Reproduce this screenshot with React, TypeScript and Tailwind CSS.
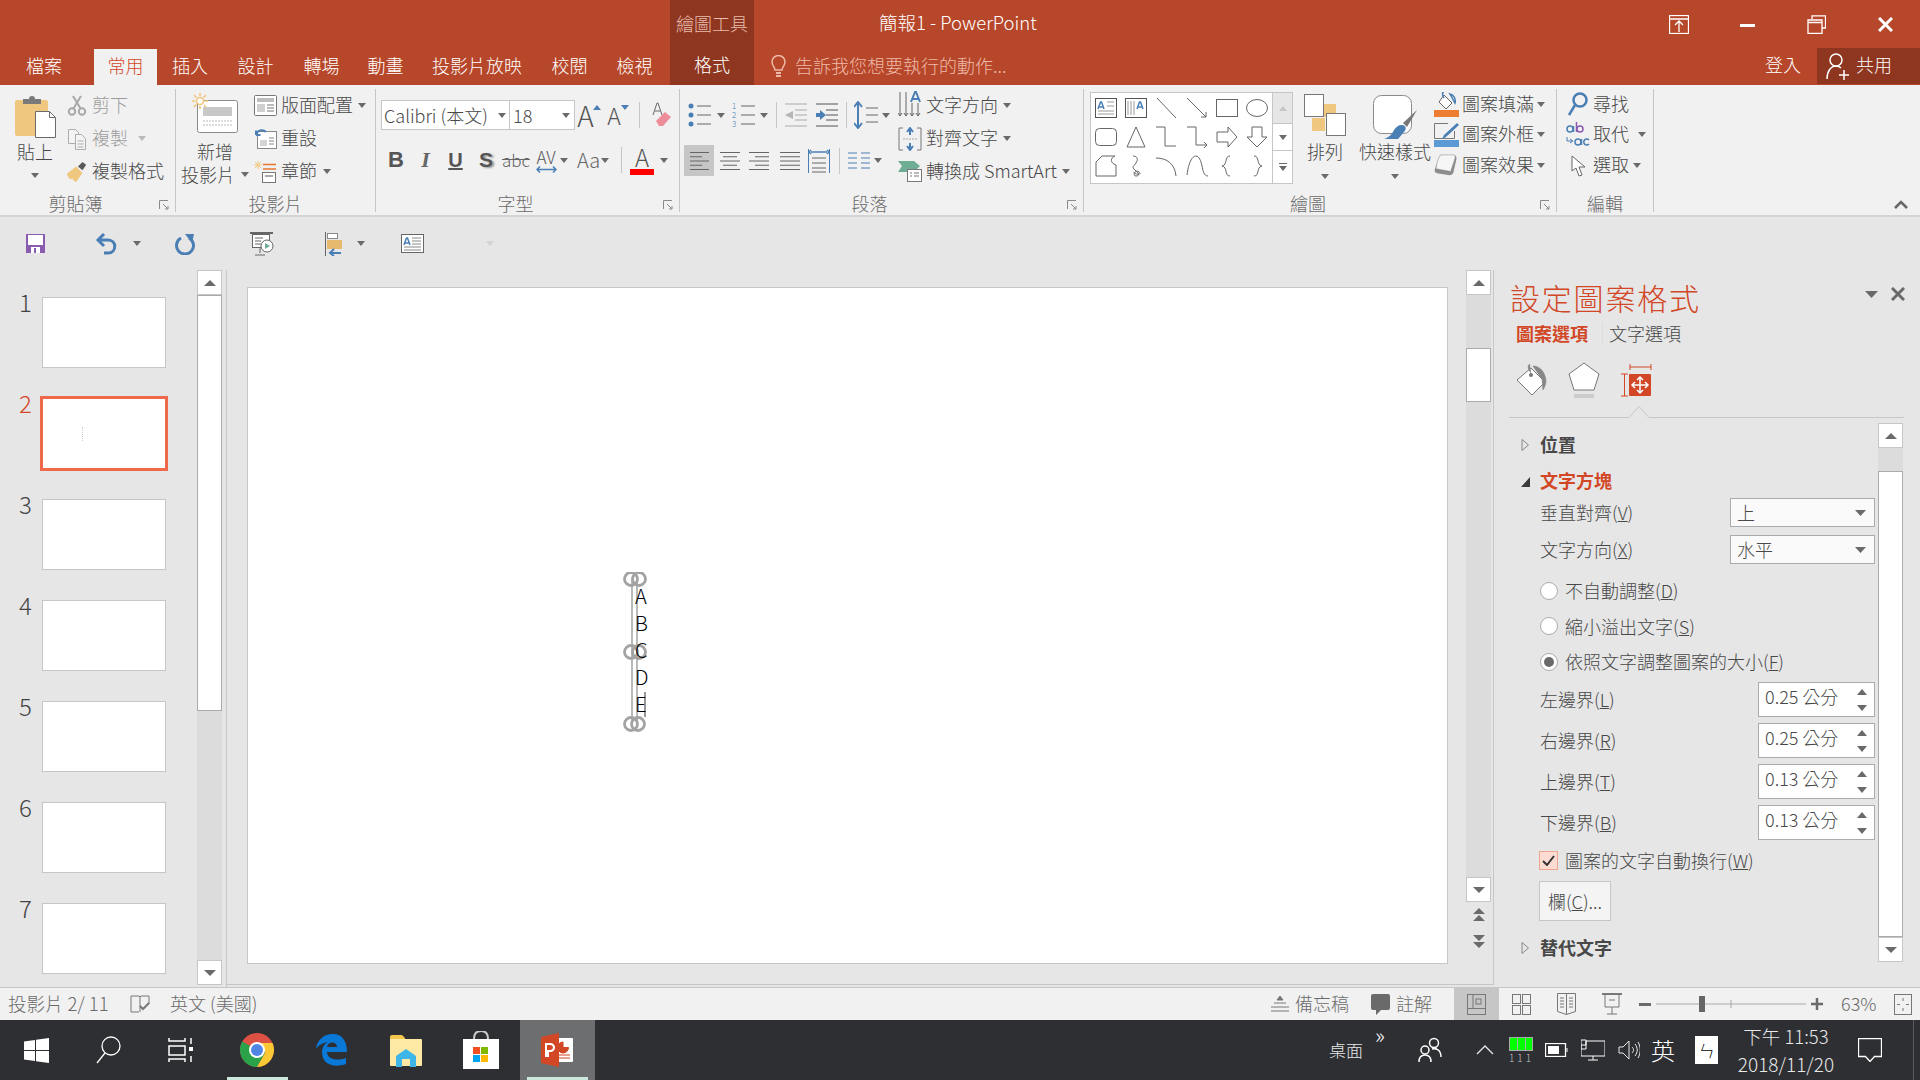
import React from 'react';

const Caret = ({ className = '' }: { className?: string }) => (
  <svg width="8" height="5" viewBox="0 0 8 5" className={`shrink-0 ${className}`}>
    <path d="M0 0h8L4 5z" fill="#6a6a6a" />
  </svg>
);

const Launcher = () => (
  <svg width="10" height="10" viewBox="0 0 10 10" fill="none" stroke="#8a8a8a">
    <path d="M.5 9V.5H9M4 4l5 5M9 6v3H6" />
  </svg>
);

const Sep = ({ className = '' }: { className?: string }) => <span className={`h-[26px] w-px shrink-0 bg-[#c6c6c6] ${className}`} />;

// ribbon group: content on top, label row below, separator on the right
const Group = ({ w, label, launcher, children }: { w: string; label: string; launcher?: boolean; children: React.ReactNode }) => (
  <div className={`flex h-[123px] shrink-0 flex-col border-r border-[#c6c6c6] ${w}`}>
    <div className="h-[102px]">{children}</div>
    <div className="flex h-[21px] items-center">
      <span className="mt-[4px] flex-1 text-center text-[18px] leading-[21px] text-[#6a6a6a]">{label}</span>
      {launcher && <span className="mt-[6px] flex w-[24px] justify-start pl-[8px]"><Launcher /></span>}
    </div>
  </div>
);

const RibbonRow = ({ icon, text, iw, gap, h = 'h-[33px]', grey, caret }: { icon: React.ReactNode; text: string; iw: string; gap: string; h?: string; grey?: boolean; caret?: string }) => (
  <div className={`flex items-center ${h}`}>
    <span className={`flex shrink-0 justify-center ${iw}`}>{icon}</span>
    <span className={`-mt-[3px] ${gap} whitespace-nowrap text-[18px] leading-[22px] ${grey ? 'text-[#9c9c9c]' : 'text-[#484848]'}`}>{text}</span>
    {caret && <Caret className={caret} />}
  </div>
);

const Lines = ({ rows, color = '#666', w = 24, h = 22 }: { rows: [number, number][]; color?: string; w?: number; h?: number }) => (
  <svg width={w} height={h} viewBox={`0 0 ${w} ${h}`} stroke={color}>
    {rows.map(([a, b], i) => <path key={i} d={`M${a} ${2.5 + i * ((h - 5) / (rows.length - 1))}H${b}`} />)}
  </svg>
);

const Paste = () => (
  <svg width="41" height="44" viewBox="0 0 41 44">
    <rect y="6" width="33" height="36" rx="2" fill="#efc77f" />
    <path d="M8 10V5h6a3 3 0 0 1 6 0h6v5z" fill="#7a7a7a" />
    <path d="M20.5 17.5h14l6 6v20h-20z" fill="#fff" stroke="#6a6a6a" />
    <path d="M34.5 17.5v6h6" fill="none" stroke="#6a6a6a" />
  </svg>
);

const Scissors = () => (
  <svg width="20" height="21" viewBox="0 0 20 21" fill="none" stroke="#a8a8a8" strokeWidth="2">
    <circle cx="5" cy="16.5" r="3.2" /><circle cx="15" cy="16.5" r="3.2" /><path d="M6.5 13.5 14 1M13.5 13.5 6 1" />
  </svg>
);

const Copy = () => (
  <svg width="20" height="22" viewBox="0 0 20 22" fill="#f4f4f4" stroke="#adadad">
    <path d="M1.5 1.5h7l3 3v11h-10z" /><path d="M8.5 6.5h6l4 4v11h-10z" /><path d="M10.5 13h6M10.5 16h6M10.5 19h6" />
  </svg>
);

const Brush = () => (
  <svg width="24" height="24" viewBox="0 0 24 24">
    <path d="M1 14 11 6l7 7-7 10c-2-1-3-2-4-4l-2 1c-2-1-3-3-4-6z" fill="#efc77f" />
    <path d="m13 6 5-5 4 3-4 6z" fill="#5a5a5a" />
  </svg>
);

const NewSlide = () => (
  <svg width="46" height="41" viewBox="0 0 46 41">
    <rect x="5.5" y="8.5" width="40" height="32" rx="2" fill="#fff" stroke="#8a8a8a" />
    <rect x="11" y="15" width="29" height="9" fill="#c8c8c8" />
    <path d="M11 29h29M11 33h29" stroke="#bbb" strokeDasharray="2 1" />
    <g stroke="#efc77f" strokeWidth="1.6"><circle cx="8" cy="9" r="3.5" fill="#fff" /><path d="M8 1v3M8 14v3M0 9h3M13 9h3M2 3l2.500 2.500M12 13l2 2M14 3l-2.500 2.500M2 15l2.500-2.500" /></g>
  </svg>
);

const Layout = () => (
  <svg width="23" height="21" viewBox="0 0 23 21" fill="none">
    <rect x=".5" y=".5" width="22" height="20" rx="1" fill="#fff" stroke="#777" />
    <rect x="3" y="3" width="17" height="4" fill="#bdbdbd" /><rect x="3" y="9" width="8" height="8" fill="#d0d0d0" />
    <path d="M13 10h7M13 13h7M13 16h7" stroke="#777" />
  </svg>
);

const Reset = () => (
  <svg width="23" height="21" viewBox="0 0 23 21" fill="none">
    <rect x="3.500" y="3.500" width="19" height="17" fill="#fff" stroke="#888" />
    <rect x="6" y="12" width="7" height="6" fill="#d4d4d4" /><path d="M15 10h5M15 13h5M15 16h5" stroke="#888" />
    <path d="M2 7c1-5 7-6 10-3M2 7V2.500M2 7h4.500" stroke="#4a7fb5" strokeWidth="2" />
  </svg>
);

const Section = () => (
  <svg width="23" height="23" viewBox="0 0 23 23" fill="none">
    <g stroke="#efc77f"><path d="M4 1v8M0 5h8M1 2l6 6M7 2 1 8" /></g>
    <path d="M9 4.500h13M9 9h13" stroke="#e8792f" strokeWidth="1.500" />
    <rect x="8.500" y="12.500" width="13" height="10" fill="#fff" stroke="#777" /><rect x="11" y="15" width="8" height="2" fill="#aaa" />
  </svg>
);

const Eraser = () => (
  <svg width="20" height="28" viewBox="0 0 20 28">
    <path d="m4 20 9-9 6 5-8 9H7z" fill="#ee8d9a" /><path d="M1 14 5 2h1l4 12M3 10h5" fill="none" stroke="#6a6a6a" />
  </svg>
);

const Bullets = ({ num }: { num?: boolean }) => (
  <svg width="24" height="26" viewBox="0 0 24 26">
    {[4, 13, 22].map((y, i) => (
      <g key={y}>
        {num ? <text x="1" y={y + 3} fontSize="8" fill="#4a7fb5">{i + 1}</text> : <circle cx="4" cy={y} r="2.500" fill="#4a7fb5" />}
        <path d={`M10 ${y}h14`} stroke="#666" />
      </g>
    ))}
  </svg>
);

const Indent = ({ out }: { out?: boolean }) => (
  <svg width="24" height="26" viewBox="0 0 24 26">
    <path d="M1 2h22M11 8h12M11 13h12M11 18h12M1 24h22" stroke={out ? '#aaa' : '#555'} />
    {out ? <path d="M9 9v8l-8-4z M6 12h3v2H6z" fill="#b5b5b5" /> : <path d="M1 11h4V8l6 5-6 5v-3H1z" fill="#4a7fb5" />}
  </svg>
);

const LineSpacing = () => (
  <svg width="24" height="28" viewBox="0 0 24 28" fill="none">
    <path d="M4 2v24M0 6l4-5 4 5M0 22l4 5 4-5" stroke="#4a7fb5" strokeWidth="2" /><path d="M12 7h12M12 14h12M12 21h12" stroke="#666" />
  </svg>
);

const TextDir = () => (
  <svg width="24" height="29" viewBox="0 0 24 29" fill="none" stroke="#666">
    <path d="M2 1v24M8 1v24M14 12v13M20 12v13M0 22l2 3 2-3M6 22l2 3 2-3M12 22l2 3 2-3M18 22l2 3 2-3" />
    <path d="m13 11 4-10h1l4 10M15 8h5" stroke="#4a7fb5" strokeWidth="2" />
  </svg>
);

const AlignText = () => (
  <svg width="24" height="24" viewBox="0 0 24 24" fill="none">
    <path d="M5 1H1v22h4M19 1h4v22h-4" stroke="#777" /><path d="M5 12h14" stroke="#aaa" strokeDasharray="2 1" />
    <path d="M12 1v7M9 5l3-4 3 4M12 23v-7M9 19l3 4 3-4" stroke="#4a7fb5" strokeWidth="2" />
  </svg>
);

const SmartArt = () => (
  <svg width="24" height="21" viewBox="0 0 24 21">
    <path d="M0 0h16l6 5-6 6H0l4-6z" fill="#6fae95" /><rect x="9.500" y="8.500" width="14" height="12" fill="#fff" stroke="#777" /><path d="M12 12h2M16 12h5M12 15h2M16 15h5" stroke="#777" />
  </svg>
);

const shapes: React.ReactNode[] = [
  <><rect x=".5" y="1.500" width="21" height="19" fill="#fff" stroke="#555" /><path d="m3 12 2.500-7h1L9 12M4 10h4" fill="none" stroke="#4a7fb5" strokeWidth="1.500" /><path d="M12 5h7M12 9h7M3 14h16M3 17h16" stroke="#999" /></>,
  <><rect x=".5" y="1.500" width="21" height="19" fill="#fff" stroke="#555" /><path d="m12 12 2.500-7h1L18 12M13 10h4" fill="none" stroke="#4a7fb5" strokeWidth="1.500" /><path d="M3 4v14M6 4v14M9 4v14" stroke="#999" /></>,
  <path d="m2 1 19 20" stroke="#666" />,
  <path d="m1 1 19 19M20 15v5h-5" stroke="#666" fill="none" />,
  <rect x=".5" y="2.500" width="21" height="17" fill="#fff" stroke="#666" />,
  <ellipse cx="11" cy="11" rx="10.500" ry="8.500" fill="#fff" stroke="#666" />,
  <rect x=".5" y="2.500" width="21" height="17" rx="4" fill="#fff" stroke="#666" />,
  <path d="M11 1 20 21H2z" fill="#fff" stroke="#666" />,
  <path d="M1 1h9v19h11" fill="none" stroke="#666" />,
  <path d="M1 1h9v18h11M18 16l3 3-3 3" fill="none" stroke="#666" />,
  <path d="M1 6h11V1l9 10-9 10v-5H1z" fill="#fff" stroke="#666" />,
  <path d="M6 1h10v10h5L11 21 1 11h5z" fill="#fff" stroke="#666" />,
  <path d="M7 1h13c-5 2-5 7 1 9v11H1V7z" fill="#fff" stroke="#666" />,
  <path d="M8 1c5 0 5 4 3 7s-5 4-1 7 5 6 1 6-1-7 3-4-5 3-5 0" fill="none" stroke="#666" />,
  <path d="M1 3c11 0 19 6 20 18" fill="none" stroke="#666" />,
  <path d="M1 20C3 5 7 1 10 1s5 5 6 10 2 10 6 10" fill="none" stroke="#666" />,
  <path d="M14 1c-6 0-2 9-8 10 6 1 2 10 8 10" fill="none" stroke="#666" />,
  <path d="M8 1c6 0 2 9 8 10-6 1-2 10-8 10" fill="none" stroke="#666" />,
];

const Arrange = () => (
  <svg width="42" height="42" viewBox="0 0 42 42">
    <rect x="19" y="10" width="13" height="13" fill="#efc77f" /><rect x="8" y="24" width="13" height="13" fill="#efc77f" />
    <rect x=".5" y=".5" width="19" height="22" fill="#fff" stroke="#777" /><rect x="22.500" y="19.500" width="19" height="22" fill="#fff" stroke="#777" />
  </svg>
);

const QuickStyle = () => (
  <svg width="44" height="45" viewBox="0 0 44 45">
    <rect x=".5" y=".5" width="38" height="38" rx="8" fill="#fff" stroke="#8a8a8a" />
    <path d="m44 15-10 17-4-4z" fill="#777" /><path d="M29 30c4 0 5 4 2 7l-6 7H11c6-2 8-5 10-9 2-3 4-5 8-5z" fill="#4a7fb5" />
  </svg>
);

const FillIcon = () => (
  <svg width="25" height="25" viewBox="0 0 25 25">
    <rect y="18" width="25" height="7" fill="#ed7d31" /><path d="m10 3 8 8-6 6-7-7z" fill="#fff" stroke="#666" /><path d="M10 0c-2 0-2 3 0 6M16 2c4 1 6 5 5 9-2-3-3-6-5-9z" fill="none" stroke="#4a7fb5" strokeWidth="1.500" />
  </svg>
);

const OutlineIcon = () => (
  <svg width="25" height="24" viewBox="0 0 25 24">
    <rect y="17" width="25" height="7" fill="#5b9bd5" /><path d="M14 .5H.5v15h20V8" fill="none" stroke="#777" /><path d="M23 0l2 2L12 14l-4 2 2-4z" fill="#4a7fb5" />
  </svg>
);

const EffectIcon = () => (
  <svg width="25" height="23" viewBox="0 0 27 25">
    <path d="M7 1h14c3 0 4 3 3 6l-3 13c-1 2-2 3-4 3L3 21c-2-1-3-3-2-5z" fill="#8d8d8d" /><path d="M7 1h14c3 0 2 3 1 6L18 19 2 16C3 10 4 5 7 1z" fill="#f6f6f6" stroke="#777" strokeWidth=".5" />
  </svg>
);

const Find = () => (
  <svg width="20" height="24" viewBox="0 0 20 24" fill="none" stroke="#4a7fb5">
    <circle cx="12" cy="8" r="6.500" strokeWidth="2.500" /><path d="M7 13 1 23" strokeWidth="2.500" />
  </svg>
);

const Replace = () => (
  <svg width="24" height="26" viewBox="0 0 24 26" fill="none">
    <circle cx="4" cy="7" r="3" stroke="#4a7fb5" strokeWidth="1.500" /><path d="M7.500 4v6" stroke="#4a7fb5" strokeWidth="1.500" />
    <circle cx="14" cy="7" r="3" stroke="#8a5cb0" strokeWidth="1.500" /><path d="M10.500 0v10" stroke="#8a5cb0" strokeWidth="1.500" />
    <circle cx="12" cy="20" r="3" stroke="#4a7fb5" strokeWidth="1.500" /><path d="M15.500 17v6" stroke="#4a7fb5" strokeWidth="1.500" />
    <path d="M23 18a3 3 0 1 0 0 4" stroke="#4a7fb5" strokeWidth="1.500" /><path d="M1 15v4h5M4 17l3 2-3 2" stroke="#4a7fb5" />
  </svg>
);

const Pointer = () => (
  <svg width="15" height="22" viewBox="0 0 15 22"><path d="M1 1v15l4-3 3 8 3-1-3-8h6z" fill="#fff" stroke="#666" /></svg>
);

const Ribbon = () => (
  <div className="flex h-[132px] shrink-0 border-b-2 border-[#d4d4d4] bg-[#f1f1f1] pt-[4px]">
    <Group w="w-[176px]" label="剪貼簿" launcher>
      <div className="flex">
        <div className="ml-[8px] flex w-[54px] flex-col items-center pt-[5px]">
          <Paste />
          <span className="mt-[2px] text-[18px] leading-[22px] text-[#484848]">貼上</span>
          <Caret className="mt-[11px]" />
        </div>
        <div className="ml-[4px]">
          <RibbonRow icon={<Scissors />} text="剪下" iw="w-[22px]" gap="ml-[4px]" grey />
          <RibbonRow icon={<Copy />} text="複製" iw="w-[22px]" gap="ml-[4px]" grey caret="ml-[10px] opacity-40" />
          <RibbonRow icon={<Brush />} text="複製格式" iw="w-[22px]" gap="ml-[4px]" />
        </div>
      </div>
    </Group>
    <Group w="w-[200px]" label="投影片">
      <div className="flex">
        <div className="flex w-[78px] flex-col items-center pt-[3px]">
          <NewSlide />
          <span className="mt-[6px] text-[18px] leading-[24px] text-[#484848]">新增</span>
          <span className="-mt-[1px] flex items-center text-[18px] leading-[24px] text-[#484848]">投影片<Caret className="ml-[6px]" /></span>
        </div>
        <div>
          <RibbonRow icon={<Layout />} text="版面配置" iw="w-[23px]" gap="ml-[4px]" caret="ml-[5px]" />
          <RibbonRow icon={<Reset />} text="重設" iw="w-[23px]" gap="ml-[4px]" />
          <RibbonRow icon={<Section />} text="章節" iw="w-[23px]" gap="ml-[4px]" caret="ml-[6px]" />
        </div>
      </div>
    </Group>
    <Group w="w-[304px]" label="字型" launcher>
      <div className="pt-[11px]">
        <div className="flex h-[30px] items-center pl-[5px]">
          <div className="flex h-[30px] w-[129px] items-center border border-[#c6c6c6] bg-white pl-[2px] text-[18px] leading-[24px] text-[#484848]"><span className="flex-1 whitespace-nowrap">Calibri (本文)</span><Caret className="mr-[3px]" /></div>
          <div className="flex h-[30px] w-[65px] items-center border border-l-0 border-[#c6c6c6] bg-white pl-[3px] text-[18px] leading-[24px] text-[#484848]"><span className="flex-1">18</span><Caret className="mr-[4px]" /></div>
          <span className="flex w-[28px] items-start justify-center text-[28px] leading-[30px] text-[#555]">A<svg width="8" height="5" viewBox="0 0 8 5" className="mt-[5px] -ml-[1px]"><path d="M0 5h8L4 0z" fill="#4a7fb5" /></svg></span>
          <span className="flex w-[30px] items-start justify-center text-[23px] leading-[30px] text-[#555]">A<svg width="8" height="5" viewBox="0 0 8 5" className="mt-[5px]"><path d="M0 0h8L4 5z" fill="#4a7fb5" /></svg></span>
          <Sep className="ml-[6px]" />
          <span className="ml-[12px]"><Eraser /></span>
        </div>
        <div className="mt-[15px] flex h-[30px] items-center pl-[5px] text-[#555]">
          <span className="w-[30px] text-center font-['Liberation_Sans'] text-[22px] leading-[26px] font-bold">B</span>
          <span className="w-[29px] text-center font-['Liberation_Serif'] text-[22px] leading-[26px] font-bold text-[#666] italic">I</span>
          <span className="w-[31px] text-center font-['Liberation_Sans'] text-[20px] leading-[26px] font-bold underline">U</span>
          <span className="w-[30px] text-center font-['Liberation_Sans'] text-[21px] leading-[26px] font-bold [text-shadow:2px_1px_2px_#999]">S</span>
          <span className="w-[30px] text-center text-[17px] leading-[24px] text-[#666] line-through">abc</span>
          <span className="flex w-[42px] items-center pl-[4px]">
            <span className="flex w-[22px] flex-col items-center text-[17px] leading-[18px]">AV<svg width="21" height="7" viewBox="0 0 21 7" fill="none" stroke="#4a7fb5" strokeWidth="1.500"><path d="M1 3.500h19M4 .5l-3 3 3 3M17 .5l3 3-3 3" /></svg></span>
            <Caret className="ml-[3px]" />
          </span>
          <span className="flex w-[42px] items-center pl-[4px] text-[20px] leading-[26px] text-[#666]">Aa<Caret className="ml-[1px]" /></span>
          <Sep className="ml-[6px]" />
          <span className="ml-[8px] flex w-[24px] flex-col items-center text-[24px] leading-[24px] text-[#555]">A<span className="h-[6px] w-[24px] bg-[#ff0000]" /></span>
          <Caret className="ml-[6px]" />
        </div>
      </div>
    </Group>
    <Group w="w-[404px]" label="段落" launcher>
      <div className="flex">
        <div className="w-[218px] pt-[11px]">
          <div className="flex h-[30px] items-center pl-[7px]">
            <Bullets /><Caret className="ml-[6px]" />
            <span className="ml-[6px]"><Bullets num /></span><Caret className="ml-[5px]" />
            <Sep className="ml-[8px]" />
            <span className="ml-[7px]"><Indent out /></span>
            <span className="ml-[7px]"><Indent /></span>
            <Sep className="ml-[7px]" />
            <span className="ml-[7px]"><LineSpacing /></span><Caret className="ml-[4px]" />
          </div>
          <div className="mt-[15px] flex h-[31px] items-center pl-[4px]">
            <span className="flex h-[31px] w-[30px] items-center justify-center bg-[#c6c6c6]"><Lines rows={[[1, 20], [1, 13], [1, 20], [1, 13], [1, 20]]} w={21} /></span>
            <span className="ml-[3px] flex w-[26px] justify-center"><Lines rows={[[0, 20], [3, 17], [0, 20], [3, 17], [0, 20]]} w={20} /></span>
            <span className="ml-[3px] flex w-[26px] justify-center"><Lines rows={[[0, 20], [6, 20], [0, 20], [6, 20], [0, 20]]} w={20} /></span>
            <span className="ml-[5px] flex w-[26px] justify-center"><Lines rows={[[0, 20], [0, 20], [0, 20], [0, 20], [0, 20]]} w={20} /></span>
            <span className="ml-[3px] flex w-[26px] justify-center">
              <svg width="22" height="26" viewBox="0 0 22 26" fill="none"><path d="M.5 1v24M21.500 1v24" stroke="#4a7fb5" /><path d="M3 4h16M3 2l-2 2 2 2M19 2l2 2-2 2" stroke="#4a7fb5" strokeWidth="1.500" /><path d="M4 10h14M4 15h14M4 20h14M4 24h14" stroke="#666" /></svg>
            </span>
            <Sep className="ml-[7px]" />
            <span className="ml-[7px] flex w-[24px] justify-center"><svg width="22" height="24" viewBox="0 0 22 24" stroke="#4a7fb5"><path d="M0 4h9M13 4h9M0 9h9M13 9h9M0 14h9M13 14h9M0 19h9M13 19h9" /></svg></span>
            <Caret className="ml-[3px]" />
          </div>
        </div>
        <div>
          <RibbonRow icon={<TextDir />} text="文字方向" iw="w-[24px]" gap="ml-[4px]" caret="ml-[5px]" />
          <RibbonRow icon={<AlignText />} text="對齊文字" iw="w-[24px]" gap="ml-[4px]" caret="ml-[5px]" />
          <RibbonRow icon={<SmartArt />} text="轉換成 SmartArt" iw="w-[24px]" gap="ml-[4px]" caret="ml-[5px]" />
        </div>
      </div>
    </Group>
    <Group w="w-[473px]" label="繪圖" launcher>
      <div className="flex">
        <div className="ml-[6px] mt-[3px] flex h-[92px] w-[203px] border border-[#c6c6c6] bg-white">
          <div className="grid flex-1 grid-cols-6 place-items-center pb-[3px]">
            {shapes.map((s, i) => <svg key={i} width="22" height="22" viewBox="0 0 22 22">{s}</svg>)}
          </div>
          <div className="flex w-[20px] flex-col border-l border-[#c6c6c6]">
            <span className="flex h-[30px] items-center justify-center bg-[#e6e6e6]"><svg width="8" height="5" viewBox="0 0 8 5"><path d="M0 5h8L4 0z" fill="#c6c6c6" /></svg></span>
            <span className="flex h-[28px] items-center justify-center border-y border-[#c6c6c6]"><Caret /></span>
            <span className="flex flex-1 flex-col items-center justify-center gap-[2px]"><span className="h-px w-[8px] bg-[#6a6a6a]" /><Caret /></span>
          </div>
        </div>
        <div className="flex w-[64px] flex-col items-center pt-[5px]">
          <Arrange />
          <span className="mt-[4px] text-[18px] leading-[22px] text-[#484848]">排列</span>
          <Caret className="mt-[12px]" />
        </div>
        <div className="flex w-[76px] flex-col items-center pt-[6px]">
          <QuickStyle />
          <span className="mt-[0px] whitespace-nowrap text-[18px] leading-[22px] text-[#484848]">快速樣式</span>
          <Caret className="mt-[12px]" />
        </div>
        <div className="ml-[1px]">
          <RibbonRow icon={<FillIcon />} text="圖案填滿" iw="w-[25px]" gap="ml-[3px]" h="h-[30px]" caret="ml-[3px]" />
          <RibbonRow icon={<OutlineIcon />} text="圖案外框" iw="w-[25px]" gap="ml-[3px]" h="h-[31px]" caret="ml-[3px]" />
          <RibbonRow icon={<EffectIcon />} text="圖案效果" iw="w-[25px]" gap="ml-[3px]" h="h-[31px]" caret="ml-[3px]" />
        </div>
      </div>
    </Group>
    <Group w="w-[97px]" label="編輯">
      <div className="pl-[9px]">
        <RibbonRow icon={<Find />} text="尋找" iw="w-[24px]" gap="ml-[3px]" h="h-[30px]" />
        <RibbonRow icon={<Replace />} text="取代" iw="w-[24px]" gap="ml-[3px]" h="h-[31px]" caret="ml-[9px]" />
        <RibbonRow icon={<Pointer />} text="選取" iw="w-[24px]" gap="ml-[3px]" h="h-[31px]" caret="ml-[4px]" />
      </div>
    </Group>
    <div className="flex flex-1 items-end justify-end pr-[12px] pb-[6px]">
      <svg width="14" height="9" viewBox="0 0 14 9" fill="none" stroke="#666" strokeWidth="2.500"><path d="m1 8 6-6 6 6" /></svg>
    </div>
  </div>
);

const ScrollBtn = ({ down }: { down?: boolean }) => (
  <span className="flex h-[25px] w-[25px] shrink-0 items-center justify-center border border-[#c6c6c6] bg-white">
    <svg width="12" height="6" viewBox="0 0 12 6"><path d={down ? 'M0 0h12L6 6z' : 'M0 6h12L6 0z'} fill="#6a6a6a" /></svg>
  </span>
);

const Thumb = ({ h }: { h: string }) => <span className={`w-[25px] shrink-0 border-x border-y border-[#ababab] bg-white ${h}`} />;

const QatBar = () => (
  <div className="flex h-[53px] shrink-0 items-center">
    <span className="ml-[26px]">
      <svg width="19" height="19" viewBox="0 0 19 19"><path d="M0 0h19v19H0z" fill="#8a5cb0" /><rect x="2" y="1" width="15" height="10" fill="#fff" /><rect x="5" y="13" width="9" height="6" fill="#fff" /><rect x="8" y="14" width="2" height="5" fill="#8a5cb0" /></svg>
    </span>
    <span className="ml-[50px]">
      <svg width="22" height="22" viewBox="0 0 22 22" fill="none" stroke="#4a7fb5" strokeWidth="3"><path d="M9 1 3 7l6 6M3 7h10c9 0 9 13 0 13H9" /></svg>
    </span>
    <Caret className="ml-[16px]" />
    <span className="ml-[34px]">
      <svg width="20" height="22" viewBox="0 0 20 22" fill="none"><path d="M6 5a8.500 8.500 0 1 0 8 0" stroke="#4a7fb5" strokeWidth="3" /><path d="M10 1h9l-2 9z" fill="#4a7fb5" /></svg>
    </span>
    <span className="ml-[55px]">
      <svg width="24" height="24" viewBox="0 0 24 24" fill="none" stroke="#666"><path d="M0 1h23" strokeWidth="2" /><rect x="2.500" y="2.500" width="17" height="13" fill="#fff" /><path d="M5 6h8M5 9h6M5 12h6M10 16v5M5 23h10" /><circle cx="17" cy="14" r="6" fill="#fff" /><path d="m15 11 5 3-5 3z" fill="#6fae95" stroke="none" /></svg>
    </span>
    <span className="ml-[51px]">
      <svg width="18" height="24" viewBox="0 0 18 24" fill="none"><path d="M.5 0v24" stroke="#666" /><rect x="2.500" y="1.500" width="10" height="5" stroke="#888" fill="#fff" /><rect x="2" y="8" width="15" height="9" fill="#e6b96f" /><path d="M16 21H5M9 17l-4 4 4 3" stroke="#4a7fb5" strokeWidth="2" /></svg>
    </span>
    <Caret className="ml-[14px]" />
    <span className="ml-[36px]">
      <svg width="23" height="19" viewBox="0 0 23 19" fill="none"><rect x=".5" y=".5" width="22" height="18" fill="#fff" stroke="#666" /><path d="m3 11 2.500-7h1L9 11M4 9h4" stroke="#4a7fb5" strokeWidth="1.500" /><path d="M11 4h9M11 7h9M11 10h9M3 13h17M3 16h17" stroke="#888" /></svg>
    </span>
    <Caret className="ml-[62px] opacity-15" />
  </div>
);

const Thumbnails = () => (
  <div className="flex w-[227px] shrink-0 border-r border-[#c6c6c6]">
    <div className="h-[715px] w-[197px] overflow-hidden pt-[27px]">
      {[1, 2, 3, 4, 5, 6, 7].map(n => (
        <div key={n} className="flex h-[101px]">
          <span className={`-mt-[9px] w-[42px] pl-[19px] text-[24px] leading-[28px] ${n === 2 ? 'text-[#d24726]' : 'text-[#444]'}`}>{n}</span>
          {n === 2 ? (
            <span className="-mt-[2px] -ml-[2px] flex h-[75px] w-[128px] items-center border-[3px] border-[#f0694a] bg-white pl-[39px]">
              <span className="h-[14px] border-l border-dotted border-[#d9c9c4]" />
            </span>
          ) : (
            <span className="h-[71px] w-[124px] border border-[#c6c6c6] bg-white" />
          )}
        </div>
      ))}
    </div>
    <div className="flex h-[715px] w-[25px] flex-col bg-[#dcdcdc]">
      <ScrollBtn />
      <Thumb h="h-[416px]" />
      <span className="flex-1" />
      <ScrollBtn down />
    </div>
  </div>
);

const Canvas = () => (
  <div className="flex h-[715px] flex-1 border-r border-b border-[#c6c6c6] pt-[17px] pl-[20px]">
    <div className="relative h-[677px] w-[1201px] border border-[#c6c6c6] bg-white">
      <div className="absolute top-[284px] left-[375px] h-[160px] w-[30px]">
        <svg width="30" height="160" viewBox="0 0 30 160" className="absolute inset-0" fill="none" stroke="#a3a3a3">
          <path d="M9 7v145M14 7v145" strokeWidth="1.500" />
          <g strokeWidth="2.800">
            <circle cx="16" cy="7" r="6.500" /><circle cx="8" cy="7" r="6.500" />
            <circle cx="16" cy="80" r="6.500" /><circle cx="8" cy="80" r="6.500" />
            <circle cx="8" cy="152" r="6.500" /><circle cx="15" cy="152" r="6.500" />
          </g>
          <path d="M22 120v25" stroke="#333" />
        </svg>
        <div className="absolute top-[10px] left-[12px] text-[20px] leading-[27px] text-black">
          {['A', 'B', 'C', 'D', 'E'].map(c => <div key={c}>{c}</div>)}
        </div>
      </div>
    </div>
    <div className="-mt-[17px] ml-[18px] flex h-[714px] w-[25px] shrink-0 flex-col bg-[#dcdcdc]">
      <ScrollBtn />
      <span className="h-[53px] shrink-0" />
      <Thumb h="h-[54px]" />
      <span className="flex-1" />
      <ScrollBtn down />
      <div className="flex h-[82px] flex-col items-center gap-[12px] bg-[#e6e6e6] pt-[6px]">
        <svg width="14" height="14" viewBox="0 0 14 14" fill="#6a6a6a"><path d="M1 6 7 0l6 6zM1 13l6-6 6 6z" /></svg>
        <svg width="14" height="14" viewBox="0 0 14 14" fill="#6a6a6a"><path d="M1 1h12L7 7zM1 8h12l-6 6z" /></svg>
      </div>
    </div>
  </div>
);

const Mn = ({ a, k, b = ')' }: { a: string; k: string; b?: string }) => <>{a}(<span className="underline">{k}</span>{b}</>;

const Section2 = ({ open, title, red }: { open?: boolean; title: string; red?: boolean }) => (
  <div className="flex h-full items-center pl-[27px]">
    <svg width="9" height="12" viewBox="0 0 9 12">
      {open ? <path d="M9 2v10H0z" fill="#3a3a3a" /> : <path d="M1 .5v11L7.500 6z" fill="none" stroke="#888" />}
    </svg>
    <span className={`-mt-[1px] ml-[10px] text-[18px] font-bold ${red ? 'text-[#d24726]' : 'text-[#484848]'}`}>{title}</span>
  </div>
);

const Select = ({ label, value, cls }: { label: React.ReactNode; value: string; cls: string }) => (
  <div className={`flex h-[29px] items-center ${cls}`}>
    <span className="flex-1 pl-[46px] text-[18px] text-[#484848]">{label}</span>
    <div className="mr-[3px] flex h-[29px] w-[145px] items-center border border-[#ababab] bg-[#fafafa] pr-[8px] pl-[6px] text-[18px] leading-[24px] text-[#484848]">
      <span className="-mt-[2px] flex-1">{value}</span>
      <svg width="11" height="6" viewBox="0 0 11 6"><path d="M0 0h11L5.500 6z" fill="#6a6a6a" /></svg>
    </div>
  </div>
);

const Radio = ({ label, on }: { label: React.ReactNode; on?: boolean }) => (
  <div className="flex h-[35.5px] items-center pl-[46px]">
    <span className="flex h-[18px] w-[18px] items-center justify-center rounded-full border border-[#ababab] bg-white">
      {on && <span className="h-[10px] w-[10px] rounded-full bg-[#6a6a6a]" />}
    </span>
    <span className="ml-[7px] text-[18px] text-[#484848]">{label}</span>
  </div>
);

const Spin = ({ label, value, cls }: { label: React.ReactNode; value: string; cls?: string }) => (
  <div className={`flex h-[35px] items-center ${cls ?? ''}`}>
    <span className="flex-1 pl-[46px] text-[18px] text-[#484848]">{label}</span>
    <div className="mr-[3px] flex h-[35px] w-[117px] items-center border border-[#ababab] bg-white pr-[7px] pl-[6px]">
      <span className="-mt-[8px] flex-1 text-[18px] leading-[24px] whitespace-nowrap text-[#484848]">{value}</span>
      <svg width="10" height="22" viewBox="0 0 10 22" fill="#6a6a6a"><path d="M0 6h10L5 0zM0 16h10l-5 6z" /></svg>
    </div>
  </div>
);

const FormatPane = () => (
  <div className="flex w-[426px] shrink-0 flex-col">
    <div className="mt-[60px] flex h-[40px] items-center pl-[16px]">
      <span className="flex-1 text-[30px] leading-[40px] tracking-[1.8px] text-[#d24726]">設定圖案格式</span>
      <svg width="13" height="7" viewBox="0 0 13 7" className="-mt-[6px]"><path d="M0 0h13L6.500 7z" fill="#6a6a6a" /></svg>
      <svg width="14" height="14" viewBox="0 0 14 14" className="-mt-[6px] mr-[15px] ml-[13px]" stroke="#6a6a6a" strokeWidth="3"><path d="m1 1 12 12M13 1 1 13" /></svg>
    </div>
    <div className="mt-[2px] flex h-[28px] items-center pl-[22px] text-[18px] leading-[24px]">
      <span className="font-bold text-[#d24726]">圖案選項</span>
      <span className="ml-[14px] h-[22px] w-px bg-[#dcdcdc]" />
      <span className="ml-[6px] text-[#484848]">文字選項</span>
    </div>
    <div className="mt-[15px] flex h-[36px] items-center gap-[20px] pl-[22px]">
      <svg width="32" height="34" viewBox="0 0 32 34" fill="none"><path d="m15 5 14 14-13 13L1 17z" fill="#fff" stroke="#777" /><path d="M14 1c-3 1-2 6 1 9M17 3c8 0 13 8 13 16-1 5-3 8-3 8l-1-11-9-13z" stroke="#777" fill="#888" strokeWidth=".5" /><circle cx="15" cy="12" r="2" fill="#777" /></svg>
      <svg width="32" height="36" viewBox="0 0 32 36" fill="none"><path d="m16 1 15 11-5 16H6L1 12z" fill="#fff" stroke="#777" /><path d="M6 34h20" stroke="#ccc" strokeWidth="4" /></svg>
      <svg width="32" height="34" viewBox="0 0 32 34" fill="none"><path d="M10 1v6M31 1v6M10 4h21M1 11h7M1 33h7M4.500 11v22" stroke="#d24726" /><rect x="9" y="11" width="22" height="22" rx="1" fill="#d24726" /><path d="M20 14v16M12 22h16M17 17l3-3 3 3M17 27l3 3 3-3M15 19l-3 3 3 3M25 19l3 3-3 3" stroke="#fff" strokeWidth="1.500" /></svg>
    </div>
    <svg width="395" height="13" viewBox="0 0 395 13" fill="none" stroke="#c6c6c6" className="mt-[7px] ml-[15px] shrink-0"><path d="M0 12.500h120l10-11 10 11h255" /></svg>
    <div className="flex flex-1">
      <div className="w-[384px] pt-[8px]">
        <div className="h-[38px]"><Section2 title="位置" /></div>
        <div className="h-[33px]"><Section2 open title="文字方塊" red /></div>
        <Select label={<Mn a="垂直對齊" k="V" />} value="上" cls="mt-px" />
        <Select label={<Mn a="文字方向" k="X" />} value="水平" cls="mt-[8px]" />
        <div className="mt-[9px]">
          <Radio label={<Mn a="不自動調整" k="D" />} />
          <Radio label={<Mn a="縮小溢出文字" k="S" />} />
          <Radio label={<Mn a="依照文字調整圖案的大小" k="F" />} on />
        </div>
        <Spin label={<Mn a="左邊界" k="L" />} value="0.25 公分" cls="mt-[2.5px]" />
        <Spin label={<Mn a="右邊界" k="R" />} value="0.25 公分" cls="mt-[6px]" />
        <Spin label={<Mn a="上邊界" k="T" />} value="0.13 公分" cls="mt-[6px]" />
        <Spin label={<Mn a="下邊界" k="B" />} value="0.13 公分" cls="mt-[6px]" />
        <div className="mt-[11px] flex h-[19px] items-center pl-[45px]">
          <span className="flex h-[19px] w-[19px] items-center justify-center border border-[#f0a58f] bg-[#fcdcd2]">
            <svg width="13" height="11" viewBox="0 0 13 11" fill="none" stroke="#333" strokeWidth="2"><path d="m1 6 4 4 7-9" /></svg>
          </span>
          <span className="-mt-[2px] ml-[7px] text-[18px] leading-[24px] text-[#484848]"><Mn a="圖案的文字自動換行" k="W" /></span>
        </div>
        <div className="mt-[11px] ml-[45px] flex h-[40px] w-[72px] items-center justify-center border border-[#c6c6c6] bg-[#f4f4f4] text-[18px] text-[#484848]">
          <Mn a="欄" k="C" b=")..." />
        </div>
        <div className="mt-[14px] h-[26px]"><Section2 title="替代文字" /></div>
      </div>
      <div className="mt-[5px] flex h-[539px] w-[25px] flex-col bg-[#dcdcdc]">
        <ScrollBtn />
        <span className="h-[23px] shrink-0" />
        <Thumb h="flex-1" />
        <ScrollBtn down />
      </div>
    </div>
  </div>
);

const ViewBtn = ({ children, active }: { children: React.ReactNode; active?: boolean }) => (
  <span className={`flex h-[33px] w-[45px] items-center justify-center ${active ? 'bg-[#c6c6c6]' : ''}`}>{children}</span>
);

const StatusBar = () => (
  <div className="flex h-[33px] shrink-0 items-center border-t border-[#c6c6c6] bg-[#f1f1f1] text-[18px] leading-[24px] text-[#6a6a6a]">
    <span className="-mt-[3px] ml-[8px] w-[100px] text-[18.500px] whitespace-nowrap">投影片 2/ 11</span>
    <svg width="20" height="19" viewBox="0 0 20 19" fill="none" stroke="#777" className="ml-[22px]"><path d="M9 17H1V1h8l1 1 1-1h8v8M10 2v15" /><path d="m10 11 3 3 6-6" strokeWidth="2" /></svg>
    <span className="-mt-[3px] ml-[20px] whitespace-nowrap">英文 (美國)</span>
    <div className="ml-auto flex items-center">
      <svg width="18" height="18" viewBox="0 0 18 18" stroke="#777"><path d="M9 1 6 5h6z" fill="#777" /><path d="M3 8h12M0 12h18M0 16h18" /></svg>
      <span className="-mt-[3px] ml-[6px] whitespace-nowrap">備忘稿</span>
      <svg width="19" height="21" viewBox="0 0 19 21" fill="#6a6a6a" className="ml-[22px]"><path d="M0 2a2 2 0 0 1 2-2h15a2 2 0 0 1 2 2v12a2 2 0 0 1-2 2h-7l-5 5v-5H2a2 2 0 0 1-2-2z" /></svg>
      <span className="-mt-[3px] ml-[6px] whitespace-nowrap">註解</span>
      <div className="ml-[22px] flex">
        <ViewBtn active><svg width="19" height="21" viewBox="0 0 19 21" fill="none" stroke="#777"><rect x=".5" y=".5" width="18" height="20" /><path d="M6 .5v14M.5 14.500h18" /><rect x="9" y="5" width="5" height="5" /></svg></ViewBtn>
        <ViewBtn><svg width="19" height="21" viewBox="0 0 19 21" fill="none" stroke="#777"><rect x=".5" y=".5" width="8" height="9" /><rect x="10.500" y=".5" width="8" height="9" /><rect x=".5" y="11.500" width="8" height="9" /><rect x="10.500" y="11.500" width="8" height="9" /></svg></ViewBtn>
        <ViewBtn><svg width="19" height="22" viewBox="0 0 19 22" fill="none" stroke="#777"><path d="M.5.5h18v18l-9 3-9-3zM9.500.5v21M3 5h4M3 8h4M3 11h4M3 14h4M12 5h4M12 8h4M12 11h4M12 14h4" /></svg></ViewBtn>
        <ViewBtn><svg width="20" height="22" viewBox="0 0 20 22" fill="none" stroke="#777"><path d="M0 1h20" strokeWidth="2" /><path d="M3 2v12h14V2M10 14v7M5 21h10M7 7h6" /></svg></ViewBtn>
      </div>
      <span className="ml-[5px] h-[3px] w-[12px] bg-[#6a6a6a]" />
      <svg width="150" height="20" viewBox="0 0 150 20" className="ml-[5px]"><path d="M0 10h150" stroke="#a8a8a8" /><path d="M75 6v8" stroke="#a8a8a8" /><rect x="43" y="2" width="6" height="16" fill="#666" /></svg>
      <svg width="12" height="12" viewBox="0 0 12 12" className="ml-[5px]" stroke="#6a6a6a" strokeWidth="2.500"><path d="M0 6h12M6 0v12" /></svg>
      <span className="-mt-[3px] ml-[18px] w-[36px] whitespace-nowrap">63%</span>
      <svg width="18" height="21" viewBox="0 0 18 21" fill="none" stroke="#777" className="mr-[8px] ml-[17px]"><rect x=".5" y=".5" width="17" height="20" /><path d="M9 4v3M9 14v3M3 10.500h3M12 10.500h3" /></svg>
    </div>
  </div>
);

const Task = ({ children, active, run, cls = '' }: { children: React.ReactNode; active?: boolean; run?: boolean; cls?: string }) => (
  <span className={`relative flex h-[60px] shrink-0 items-center justify-center ${active ? 'bg-[#6d6e70]' : ''} ${cls}`}>
    {children}
    {run && <span className="absolute right-[7px] bottom-0 left-[7px] h-[3px] bg-[#cce8dc]" />}
  </span>
);

const Taskbar = () => (
  <div className="flex h-[60px] shrink-0 items-center bg-[#2d2f33] text-[#e8e8e8]">
    <Task cls="w-[72px]"><svg width="25" height="25" viewBox="0 0 25 25" fill="#fff"><path d="M0 3.500 11 2v10H0zM12 1.800 25 0v12H12zM0 13h11v10L0 21.500zM12 13h13v12l-13-1.800z" /></svg></Task>
    <Task cls="w-[72px]"><svg width="25" height="28" viewBox="0 0 25 28" fill="none" stroke="#fff" strokeWidth="1.300"><circle cx="15" cy="10" r="9" /><path d="m9 17-8 10" /></svg></Task>
    <Task cls="w-[72px]"><svg width="25" height="24" viewBox="0 0 25 24" fill="none" stroke="#fff" strokeWidth="1.500"><path d="M1 0v3h16V0M1 8h16v9H1zM1 24v-3h16v3M23 0v6M23 18v6" /><rect x="21" y="9" width="4" height="4" fill="#fff" stroke="none" /></svg></Task>
    <span className="w-[4px]" />
    <Task cls="w-[74.500px]" run>
      <svg width="34" height="34" viewBox="0 0 34 34"><circle cx="17" cy="17" r="17" fill="#dd5044" /><path d="M17 17 2.300 8.500A17 17 0 0 0 17 34l8.500-14.700z" fill="#2aa24a" /><path d="M17 10h15.500A17 17 0 0 1 17 34l8.500-14.700z" fill="#fcc934" /><circle cx="17" cy="17" r="8" fill="#fff" /><circle cx="17" cy="17" r="6" fill="#4f86e5" /></svg>
    </Task>
    <Task cls="w-[74.500px]">
      <svg width="31" height="32" viewBox="0 0 31 32"><path d="M0 15C1 6 8 0 17 0c9 0 14 7 14 18H11c0 6 8 10 19 6v6c-12 4-24 1-24-12 0-4 2-8 6-10-6 1-9 3-12 7zm11-2h10c0-6-9-6-10 0z" fill="#0a78d7" /></svg>
    </Task>
    <Task cls="w-[74.500px]">
      <svg width="32" height="33" viewBox="0 0 32 33"><path d="M0 3a2 2 0 0 1 2-2h10l3 3v3H0z" fill="#f3c64c" /><rect y="5" width="32" height="27" rx="1" fill="#fde9a4" /><path d="M6 33V22l10-7 10 7v11h-6v-8h-8v8z" fill="#3db5e8" /></svg>
    </Task>
    <Task cls="w-[74.500px]">
      <svg width="36" height="38" viewBox="0 0 36 38"><path d="M11 8C11 2 14 0 18 0s7 2 7 8" fill="none" stroke="#c9c9c9" strokeWidth="2" /><rect y="8" width="36" height="30" fill="#fff" /><rect x="10" y="16" width="7" height="7" fill="#f25022" /><rect x="18" y="16" width="7" height="7" fill="#7fba00" /><rect x="10" y="24" width="7" height="7" fill="#00a4ef" /><rect x="18" y="24" width="7" height="7" fill="#ffb900" /></svg>
    </Task>
    <Task cls="w-[74.500px] ml-[2px]" active run>
      <svg width="32" height="34" viewBox="0 0 32 34"><rect x="14" y="5" width="18" height="24" rx="1" fill="#fff" /><path d="M22 9a5.500 5.500 0 1 0 5.500 5.500H22zM17 22h12M17 25h12" fill="#d24726" stroke="#d24726" /><path d="M0 4 18 0v34L0 30z" fill="#d24726" /><path d="M5 11h4.500a3 3 0 0 1 0 7H7v5H5z" fill="none" stroke="#fff" strokeWidth="2" /></svg>
    </Task>
    <div className="ml-auto flex h-[60px] items-center">
      <span className="-ml-[2px] text-[17px] whitespace-nowrap">桌面</span>
      <span className="mb-[32px] ml-[12px] text-[22px] leading-none text-white">»</span>
      <svg width="24" height="26" viewBox="0 0 24 26" fill="none" stroke="#fff" strokeWidth="1.500" className="ml-[33px]"><circle cx="16" cy="6" r="4.500" /><circle cx="7" cy="13" r="4" /><path d="M1 25c0-4 2-7 6-7s6 3 6 7M14 12c3-1 9 0 9 8" /></svg>
      <svg width="18" height="10" viewBox="0 0 18 10" fill="none" stroke="#e8e8e8" strokeWidth="1.300" className="ml-[34px]"><path d="m1 9 8-8 8 8" /></svg>
      <div className="ml-[15px] flex flex-col items-center">
        <span className="flex h-[14px] w-[24px] gap-px bg-[#a9a9a9] p-px"><span className="flex-1 bg-[#00ff00]" /><span className="flex-1 bg-[#00ff00]" /><span className="flex-1 bg-[#00ff00]" /></span>
        <span className="mt-[1px] text-[10px] leading-[12px] tracking-[3px] text-[#c8c8c8]">111</span>
      </div>
      <svg width="23" height="14" viewBox="0 0 23 14" fill="none" stroke="#fff" className="ml-[11px]"><rect x=".5" y=".5" width="20" height="13" strokeWidth="1.300" /><rect x="3" y="3" width="11" height="8" fill="#fff" stroke="none" /><path d="M22 5v4" /></svg>
      <svg width="24" height="22" viewBox="0 0 24 22" fill="none" stroke="#fff" className="ml-[13px]"><path d="M5 2h19v15H0V6h5zM12 17v4M7 21h10" /><path d="M0 1h5v9H0z" /></svg>
      <svg width="22" height="22" viewBox="0 0 22 22" fill="none" stroke="#e8e8e8" className="ml-[13px]"><path d="M1 8h4l6-6v18l-6-6H1zM14 8c2 2 2 4 0 6M17 5c3 4 3 8 0 12M20 3c3 5 3 11 0 16" /></svg>
      <span className="ml-[11px] text-[24px] leading-[32px] text-white">英</span>
      <span className="ml-[20px] flex h-[28px] w-[23px] items-center justify-center bg-white text-[16px] leading-[24px] text-black">ㄣ</span>
      <div className="ml-[18px] flex w-[100px] flex-col items-center leading-[27px] whitespace-nowrap">
        <span className="text-[18.500px]">下午 11:53</span><span className="text-[19px]">2018/11/20</span>
      </div>
      <svg width="24" height="24" viewBox="0 0 24 24" fill="none" stroke="#fff" strokeWidth="1.300" className="ml-[22px]"><path d="M.5.5h23v18h-7l-4.500 5-4.500-5h-7z" /></svg>
      <span className="ml-[31px] h-[60px] w-px bg-[#5a5c60]" />
      <span className="w-[6px]" />
    </div>
  </div>
);

const tabs: [string, string][] = [
  ['插入', 'w-[66px]'], ['設計', 'w-[65px]'], ['轉場', 'w-[67px]'], ['動畫', 'w-[61px]'],
  ['投影片放映', 'w-[122px]'], ['校閱', 'w-[63px]'], ['檢視', 'w-[67px]'],
];

const TitleBar = () => (
  <div className="grid h-[85px] shrink-0 grid-cols-[670px_84px_1fr] bg-[#b7472a] text-white">
    <div className="flex items-end text-[18px]">
      <span className="flex h-[36px] w-[94px] items-center justify-center pr-[6px] pb-[3px]">檔案</span>
      <span className="flex h-[36px] w-[63px] items-center justify-center bg-[#f1f1f1] pb-[3px] text-[#d24726]">常用</span>
      {tabs.map(([t, w]) => <span key={t} className={`flex h-[36px] items-center justify-center pb-[3px] ${w}`}>{t}</span>)}
    </div>
    <div className="flex flex-col items-center bg-[#8e3620] text-[18px]">
      <span className="flex h-[46px] items-center whitespace-nowrap text-[#e9bdae]">繪圖工具</span>
      <span className="flex h-[37px] items-center">格式</span>
    </div>
    <div className="flex flex-col">
      <div className="flex h-[48px] items-center justify-between">
        <span className="-mt-[2px] pl-[125px] text-[18.500px] whitespace-nowrap">簡報1 - PowerPoint</span>
        <div className="flex">
          <span className="flex h-[48px] w-[69px] items-center justify-center"><svg width="20" height="19" viewBox="0 0 20 19" fill="none" stroke="#fff" strokeWidth="1.300"><rect x=".5" y=".5" width="19" height="18" /><path d="M.5 4h19M10 17V7M6 10l4-4 4 4" /></svg></span>
          <span className="flex h-[48px] w-[69px] items-center justify-center"><span className="mt-[3px] h-[3px] w-[15px] bg-white" /></span>
          <span className="flex h-[48px] w-[69px] items-center justify-center"><svg width="19" height="19" viewBox="0 0 19 19" fill="none" stroke="#fff" strokeWidth="1.300"><path d="M5 4V.8h13.500V13H15" /><path d="M1 5h14v13.500H1zM1 7.500h14" /></svg></span>
          <span className="flex h-[48px] w-[69px] items-center justify-center"><svg width="15" height="15" viewBox="0 0 15 15" stroke="#fff" strokeWidth="3"><path d="m1 1 13 13M14 1 1 14" /></svg></span>
        </div>
      </div>
      <div className="flex h-[37px] items-start pl-[17px]">
        <div className="flex h-[36px] items-center">
          <svg width="15" height="22" viewBox="0 0 15 22" fill="none" stroke="#eeb9a8" strokeWidth="1.500"><path d="M4 15c0-3-3-4-3-8a6.500 6.500 0 0 1 13 0c0 4-3 5-3 8z" /><path d="M5 18h5M5 21h5" strokeWidth="2" /></svg>
          <span className="-mt-[2px] ml-[9px] text-[18px] whitespace-nowrap text-[#eeb9a8]">告訴我您想要執行的動作...</span>
        </div>
        <span className="ml-auto flex h-[36px] items-center pb-[3px] text-[18px] whitespace-nowrap">登入</span>
        <div className="ml-[16px] flex h-[36px] w-[103px] items-center bg-[#8e3620] pl-[9px]">
          <svg width="24" height="28" viewBox="0 0 24 28" fill="none" stroke="#fff" strokeWidth="1.500"><circle cx="10" cy="8" r="6" /><path d="M1 27c0-8 4-13 9-13 2 0 4 1 5 2M13 23h10M18 18v10" /></svg>
          <span className="-mt-[3px] ml-[6px] text-[18px] whitespace-nowrap">共用</span>
        </div>
      </div>
    </div>
  </div>
);

export default function App() {
  return (
    <div className="flex h-[1080px] w-[1920px] flex-col overflow-hidden bg-[#e6e6e6] font-['Noto_Sans_CJK_TC','Noto_Sans',sans-serif] font-light">
      <TitleBar />
      <Ribbon />
      <div className="flex h-[770px] shrink-0">
        <div className="flex w-[1494px] shrink-0 flex-col">
          <QatBar />
          <div className="flex flex-1">
            <Thumbnails />
            <Canvas />
          </div>
        </div>
        <FormatPane />
      </div>
      <StatusBar />
      <Taskbar />
    </div>
  );
}
